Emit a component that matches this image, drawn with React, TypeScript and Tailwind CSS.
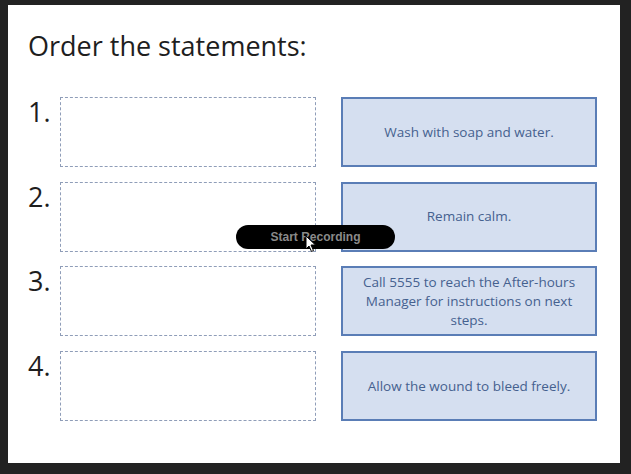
import React from 'react';

const rows = [
  { n: '1.', text: 'Wash with soap and water.' },
  { n: '2.', text: 'Remain calm.' },
  { n: '3.', text: 'Call 5555 to reach the After-hours Manager for instructions on next steps.' },
  { n: '4.', text: 'Allow the wound to bleed freely.' },
];

function Cursor() {
  return (
    <svg width="12" height="18" viewBox="0 0 12 18" className="absolute left-[305px] top-[235px]">
      <path d="M1 1 L1 14 L4 11 L6.5 16.5 L8.5 15.5 L6 10 L10.5 10 Z" fill="#fff" stroke="#000" strokeWidth="1" strokeLinejoin="round" />
    </svg>
  );
}

export default function App() {
  return (
    <div className="relative w-[631px] h-[474px] bg-[#222222] pl-[8px] pt-[5px] pr-[11px] pb-[11px] font-['Open_Sans',sans-serif]">
      <div className="h-full w-full bg-white pl-[20px] pt-[25px]">
        <h1 className="text-[27px] leading-[32px] text-[#1e1e1e]">Order the statements:</h1>
        <div className="mt-[35px] flex flex-col gap-y-[14.7px]">
          {rows.map((r) => (
            <div key={r.n} className="flex h-[70px]">
              <div className="w-[32px] pt-px text-[27px] leading-none text-[#1e1e1e]">{r.n}</div>
              <div className="w-[256px] h-full border border-dashed border-[#8f9db8]" />
              <div className="ml-[25px] w-[256px] h-full border-2 border-[#5a7db6] bg-[#d5dff0] flex items-center justify-center px-[14px] text-center text-[13.5px] leading-[19px] text-[#45618f]">
                {r.text}
              </div>
            </div>
          ))}
        </div>
      </div>
      <div className="absolute left-[236px] top-[225px] w-[159px] h-[24px] rounded-full bg-black flex items-center justify-center font-['Liberation_Sans',sans-serif] font-bold text-[12px] text-[#8a8a8a]">
        Start Recording
      </div>
      <Cursor />
    </div>
  );
}
